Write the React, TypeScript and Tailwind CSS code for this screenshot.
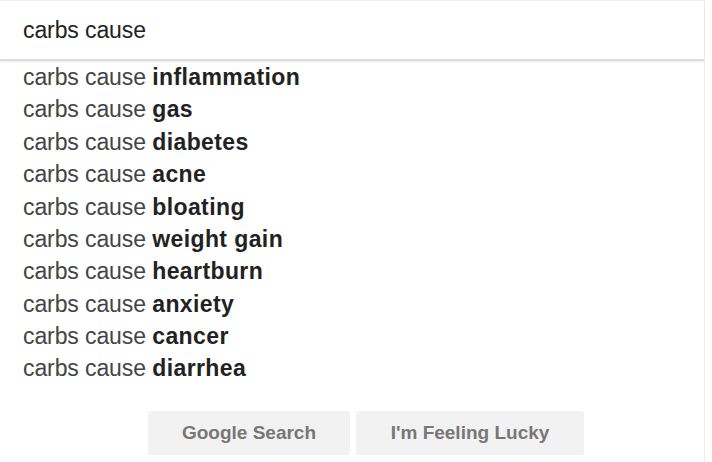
const suggestions = [
  "inflammation",
  "gas",
  "diabetes",
  "acne",
  "bloating",
  "weight gain",
  "heartburn",
  "anxiety",
  "cancer",
  "diarrhea",
];

/**
 * Search box with autocomplete dropdown
 */
export default function App() {
  return (
    <div
      className="h-[462px] w-[712px] overflow-hidden bg-white"
      style={{ fontFamily: '"Liberation Sans", Arial, sans-serif' }}
    >
      <div className="h-full w-[705px] border-r border-t border-[#ededed]">
        {/* Query input */}
        <div className="flex h-[60px] items-center border-b-2 border-[#dcdcdc] pl-[23px] shadow-[0_1px_2px_rgba(0,0,0,0.08)]">
          <span className="text-[23px] tracking-[-0.1px] text-[#222]">carbs cause</span>
        </div>

        {/* Suggestions */}
        <ul>
          {suggestions.map((s) => (
            <li
              key={s}
              className="flex h-[32.4px] items-center pl-[23px] text-[23px] tracking-[-0.1px] text-[#444]"
            >
              <span className="whitespace-pre">carbs cause </span>
              <b className="font-bold tracking-[0.4px] text-[#222]">{s}</b>
            </li>
          ))}
        </ul>

        {/* Buttons */}
        <div className="ml-[148px] mt-[26px] flex gap-[6px]">
          <button className="h-[44px] w-[202px] rounded-[2px] bg-[#f2f2f2] text-[19px] font-bold text-[#777]">
            Google Search
          </button>
          <button className="h-[44px] w-[228px] rounded-[2px] bg-[#f2f2f2] text-[19px] font-bold text-[#777]">
            I'm Feeling Lucky
          </button>
        </div>
      </div>
    </div>
  );
}
